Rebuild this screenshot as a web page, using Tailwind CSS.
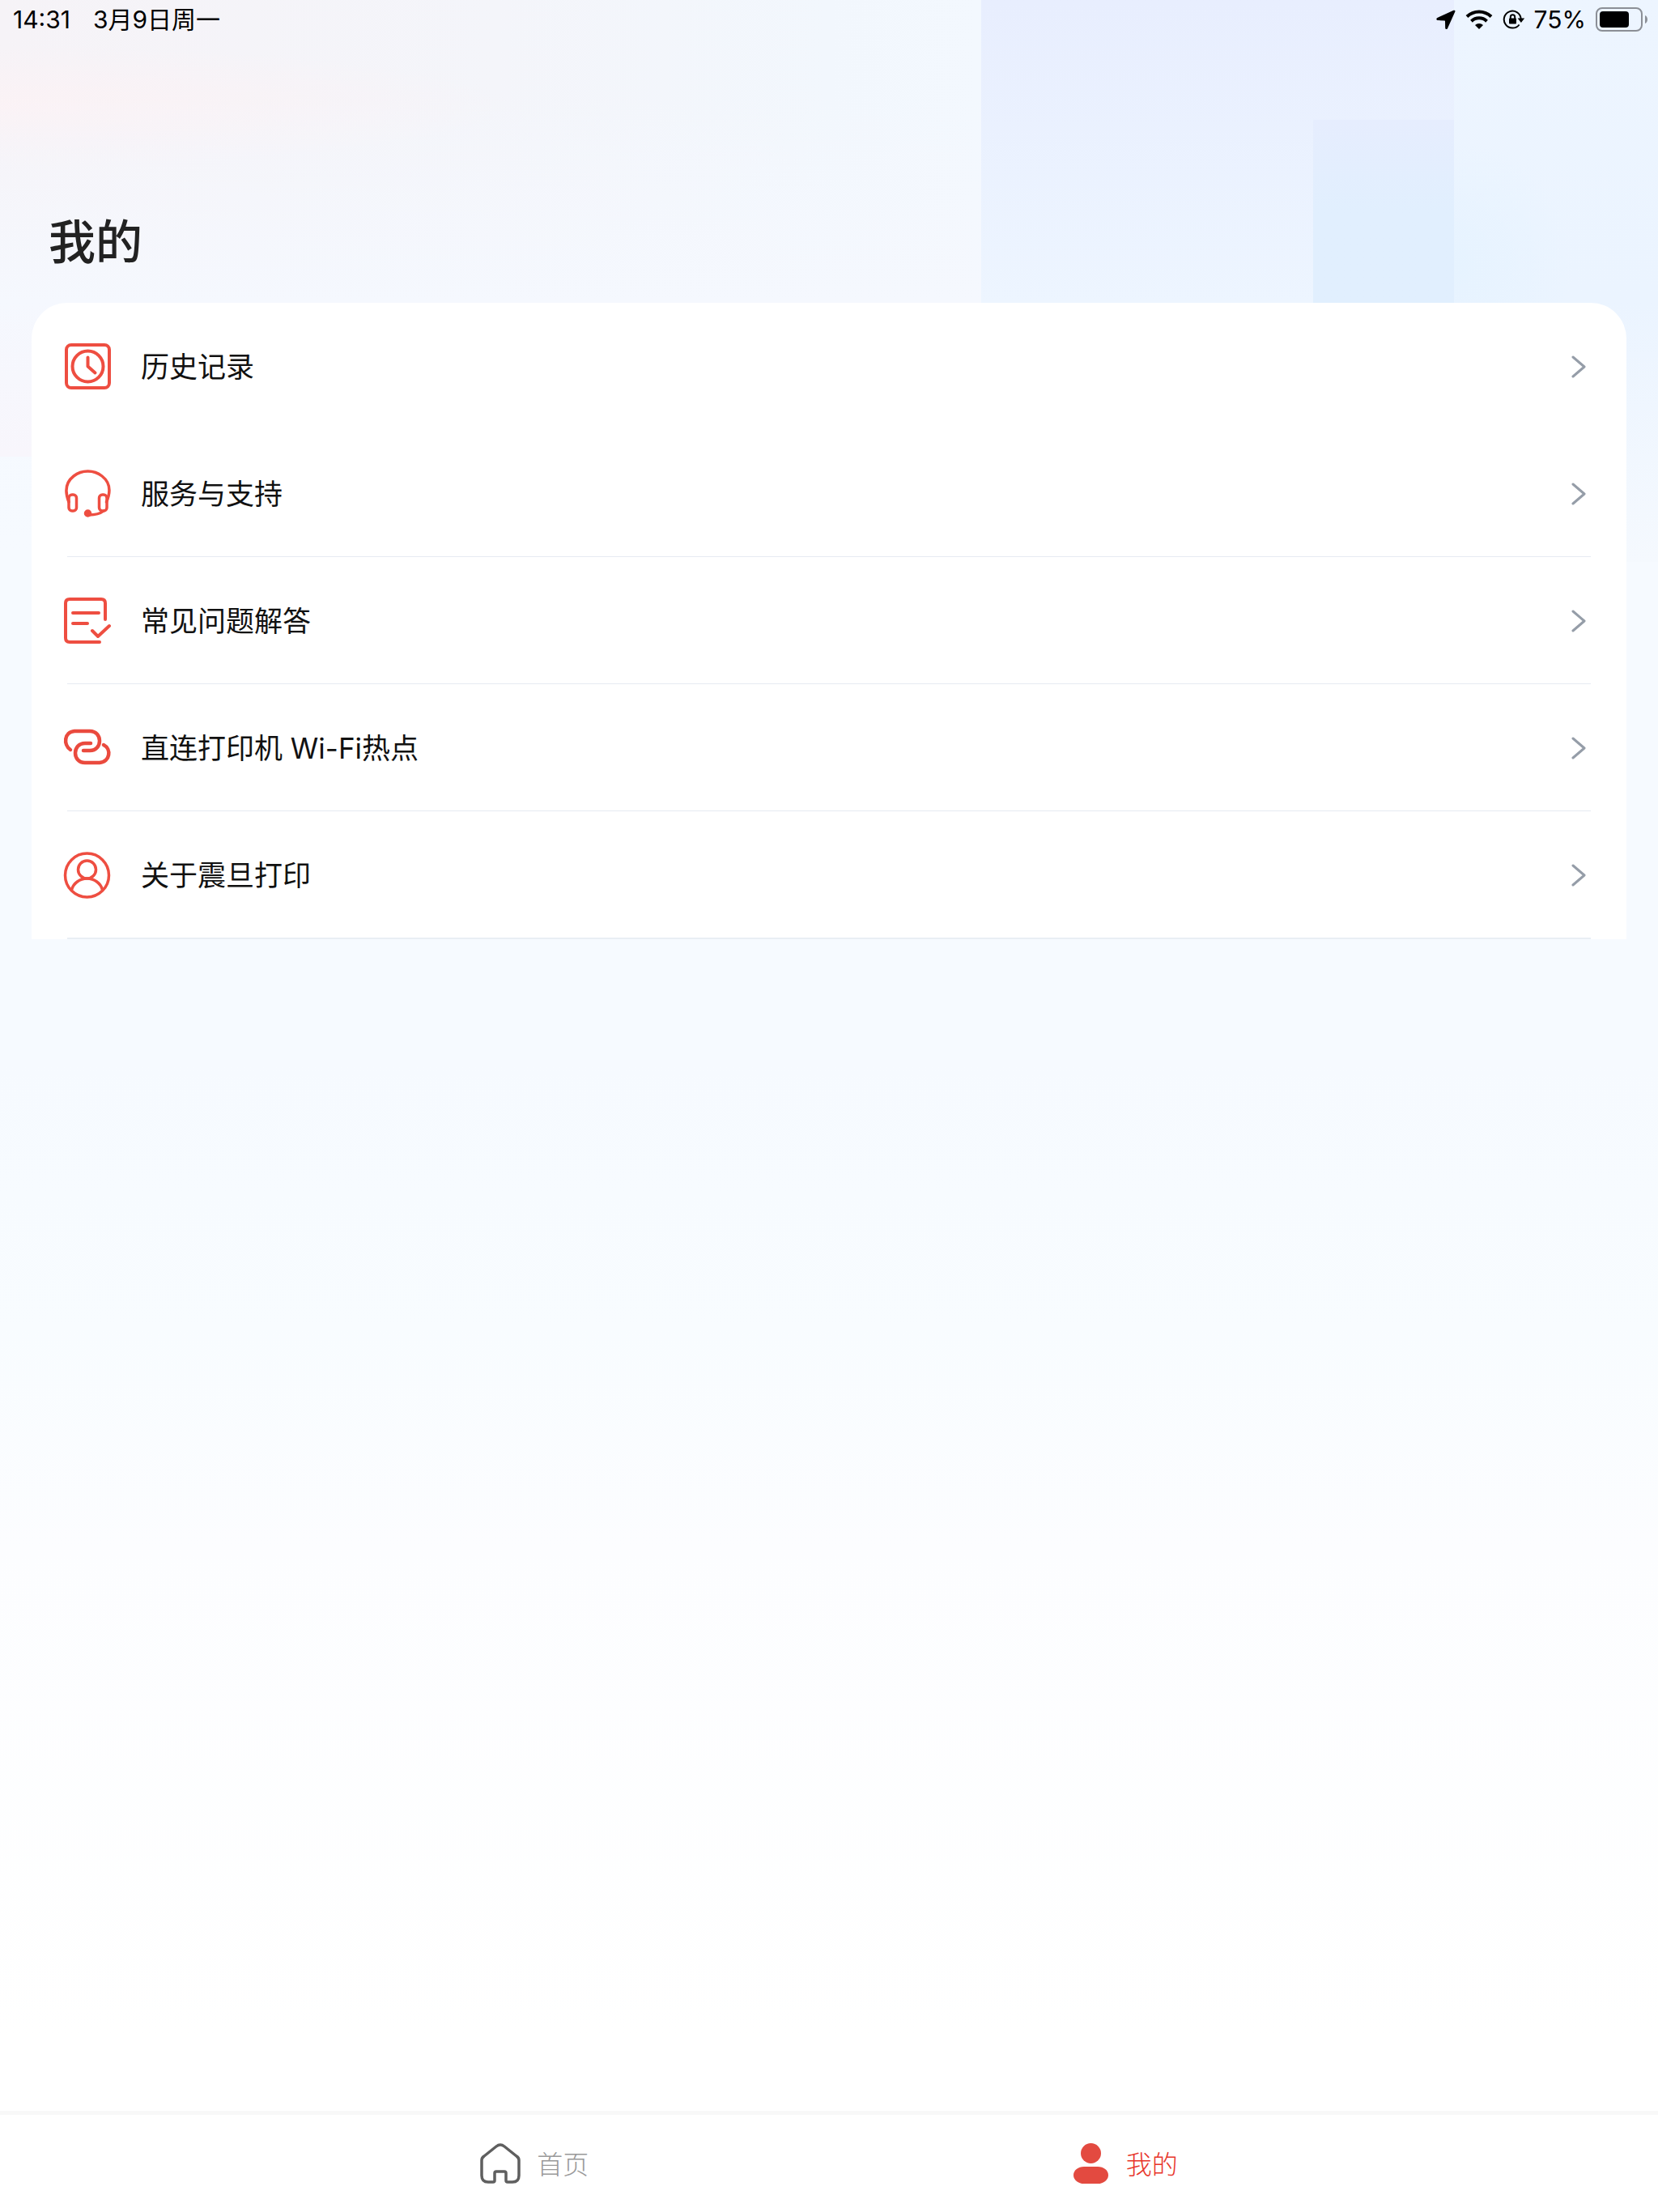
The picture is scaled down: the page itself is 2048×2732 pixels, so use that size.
<!DOCTYPE html>
<html lang="zh-CN">
<head>
    <meta charset="UTF-8">
    <meta name="viewport" content="width=device-width, initial-scale=1.0">
    <title>我的</title>
    <script src="https://cdn.jsdelivr.net/npm/@tailwindcss/browser@4"></script>
</head>
<body class="font-['Inter','Noto_Sans_CJK_SC',sans-serif] text-[#111111]">
    <div class="relative isolate flex flex-col min-h-screen bg-[linear-gradient(to_bottom,#f4f8ff_0%,#f6faff_25%,#f6faff_48%,#f8fcff_60%,#fcfdff_70%,#ffffff_92%)]">

        <!-- backdrop -->
        <div class="absolute inset-x-0 top-0 h-[374px] -z-10 overflow-hidden" aria-hidden="true">
            <div class="absolute inset-0 bg-[linear-gradient(to_right,#f6f3f7_0%,#f4f5fa_30%,#f2f7fd_50%,#f3f8fe_59%)]"></div>
            <div class="absolute inset-0 bg-[radial-gradient(ellipse_at_0%_35%,#fbf2f5_0%,transparent_22%)]"></div>
            <div class="absolute inset-0 bg-linear-to-b from-transparent from-30% to-[#f5f8fe]"></div>
            <div class="absolute inset-y-0 left-[59.2%] right-0 bg-linear-to-b from-[#e8eefe] to-[#edf5ff]"></div>
            <div class="absolute top-[148px] bottom-0 left-[79.2%] right-[12.3%] bg-linear-to-b from-[#e6edfe] to-[#e1effe] to-50%"></div>
            <div class="absolute inset-y-0 left-[87.7%] right-0 bg-linear-to-b from-[#edf5ff] to-[#ebf4ff]"></div>
            <div class="absolute top-[148px] bottom-0 left-[87.7%] right-[4%] bg-[radial-gradient(ellipse_at_0%_80%,#e6f3ff_0%,transparent_60%)]"></div>
        </div>
        <div class="absolute top-[374px] left-0 w-[84px] h-[190px] -z-10 bg-linear-to-b from-[#f5f8fe] to-[#f8f6fc]" aria-hidden="true"></div>
        <div class="absolute top-[374px] right-0 w-[84px] h-[320px] -z-10 bg-linear-to-b from-[#ebf4ff] to-[#f5f9fe]" aria-hidden="true"></div>

        <!-- status bar -->
        <header class="flex items-center justify-between h-12 pl-4 pr-3 text-[30px] leading-none text-black">
            <div class="flex gap-7">
                <span>14:31</span>
                <span>3月9日周一</span>
            </div>
            <div class="flex items-center gap-[11px]">
                <svg class="w-6 h-6" viewBox="0 0 24 24"><path d="M21.500.8 1.400 9.900c-1.700.8-1.400 3.100.6 3.200l8.400.3c.4 0 .6.200.6.600l.2 8.400c0 2 2.100 2.300 2.900.6L23.400 2.300c.5-1.100-.7-2-1.900-1.500Z"/></svg>
                <svg class="w-9 h-6" viewBox="0 0 36 24" fill="none" stroke="#000" stroke-width="4">
                    <path d="M3 8.500a21.500 21.500 0 0 1 30 0"/>
                    <path d="M8.500 14.200a13.600 13.600 0 0 1 19 0"/>
                    <path d="M18 24l-5-5a7.200 7.200 0 0 1 10 0Z" fill="#000" stroke="none"/>
                </svg>
                <svg class="w-7 h-6" viewBox="0 0 28 24" fill="none" stroke="#000" stroke-width="2">
                    <path d="M20.600 18.500A10.500 10.500 0 1 1 22.700 11"/>
                    <path d="M18.600 10.500h8.600l-4.300 5.500Z" fill="#000" stroke="none"/>
                    <rect x="8" y="10.500" width="9" height="7" rx="1" fill="#000" stroke="none"/>
                    <path d="M9.800 11V9a2.700 2.700 0 0 1 5.400 0v2"/>
                </svg>
                <span>75%</span>
                <svg class="w-[66px] h-[30px]" viewBox="0 0 66 30">
                    <rect x="2" y="1" width="56" height="28" rx="7" fill="none" stroke="#8b8f96" stroke-width="2"/>
                    <rect x="6" y="5" width="36" height="20" rx="4"/>
                    <path d="M62 10c4 1.500 4 8.500 0 10Z" fill="#8b8f96"/>
                </svg>
            </div>
        </header>

        <main class="flex-1 px-[39px]">
            <h1 class="pt-[211px] pb-[35px] px-[21px] text-[58px] leading-[80px] font-medium text-[#222222]">我的</h1>

            <nav class="bg-white rounded-t-[44px] pl-[39px] pr-[46px]">
                <a href="#history" class="flex items-center h-[157px] gap-9">
                    <svg class="w-[60px] h-[60px]" viewBox="0 0 60 60" fill="none" stroke="#ee4e41" stroke-width="4" stroke-linecap="round" stroke-linejoin="round">
                        <rect x="4" y="3" width="53" height="53" rx="6"/>
                        <circle cx="30.500" cy="29.500" r="19"/>
                        <path d="M30.500 18.500v11l9 8"/>
                    </svg>
                    <span class="flex-1 pt-0.5 text-[35px]">历史记录</span>
                    <svg class="w-6 h-7" viewBox="0 0 24 28" fill="none" stroke="#959da8" stroke-width="3" stroke-linecap="round" stroke-linejoin="round"><path d="M4 2l14 12L4 26"/></svg>
                </a>
                <a href="#support" class="flex items-center h-[157px] gap-9">
                    <svg class="w-[60px] h-[60px]" viewBox="0 0 60 60" fill="none" stroke="#ee4e41" stroke-width="3.500" stroke-linecap="round" stroke-linejoin="round">
                        <path d="M7 40C1 25 4 15 13 8c10-8 25-8 35 0 9 7 12 17 5.500 32"/>
                        <rect x="7" y="31" width="9.500" height="20" rx="4"/>
                        <rect x="44.500" y="31" width="9.500" height="20" rx="4"/>
                        <path d="M50 51c-5 4-11 5-18 5"/>
                        <circle cx="30.500" cy="54" r="3" fill="#ee4e41"/>
                    </svg>
                    <span class="flex-1 pt-0.5 text-[35px]">服务与支持</span>
                    <svg class="w-6 h-7" viewBox="0 0 24 28" fill="none" stroke="#959da8" stroke-width="3" stroke-linecap="round" stroke-linejoin="round"><path d="M4 2l14 12L4 26"/></svg>
                </a>
                <hr class="ml-[5px] -mr-0.5 -mt-px border-[#e6eaf2]">
                <a href="#faq" class="flex items-center h-[157px] gap-9">
                    <svg class="w-[60px] h-[60px]" viewBox="0 0 60 60" fill="none" stroke="#ee4e41" stroke-width="4" stroke-linecap="round" stroke-linejoin="round">
                        <path d="M45 56H8q-5 0-5-5V8q0-5 5-5h39q5 0 5 5v20"/>
                        <path d="M12 20h32M12 33h18M36 42l7 7 14-13"/>
                    </svg>
                    <span class="flex-1 pt-0.5 text-[35px]">常见问题解答</span>
                    <svg class="w-6 h-7" viewBox="0 0 24 28" fill="none" stroke="#959da8" stroke-width="3" stroke-linecap="round" stroke-linejoin="round"><path d="M4 2l14 12L4 26"/></svg>
                </a>
                <hr class="ml-[5px] -mr-0.5 -mt-px border-[#e6eaf2]">
                <a href="#hotspot" class="flex items-center h-[157px] gap-9">
                    <svg class="w-[60px] h-[60px]" viewBox="0 0 60 60" fill="none" stroke="#ea4a3e" stroke-width="4.500" stroke-linecap="round" stroke-linejoin="round">
                        <path d="M9 32C0 26 1 10 14 9h19c16 0 16 24 0 24h-8"/>
                        <path d="M34 24h-7c-16 0-16 24 0 24h18c13-1 15-17 5-22"/>
                    </svg>
                    <span class="flex-1 pt-0.5 text-[35px]">直连打印机 Wi-Fi热点</span>
                    <svg class="w-6 h-7" viewBox="0 0 24 28" fill="none" stroke="#959da8" stroke-width="3" stroke-linecap="round" stroke-linejoin="round"><path d="M4 2l14 12L4 26"/></svg>
                </a>
                <hr class="ml-[5px] -mr-0.5 -mt-px border-[#e6eaf2]">
                <a href="#about" class="flex items-center h-[157px] gap-9">
                    <svg class="w-[60px] h-[60px]" viewBox="0 0 60 60" fill="none" stroke="#ee4e41" stroke-width="3.500" stroke-linecap="round" stroke-linejoin="round">
                        <circle cx="29.500" cy="30" r="27"/>
                        <circle cx="29.500" cy="23" r="11"/>
                        <path d="M10.500 48c2-8 10-14 19-14s17 6 19 14"/>
                    </svg>
                    <span class="flex-1 pt-0.5 text-[35px]">关于震旦打印</span>
                    <svg class="w-6 h-7" viewBox="0 0 24 28" fill="none" stroke="#959da8" stroke-width="3" stroke-linecap="round" stroke-linejoin="round"><path d="M4 2l14 12L4 26"/></svg>
                </a>
                <hr class="ml-[5px] -mr-0.5 -mt-px border-t-2 border-[#e9eef4]">
            </nav>
        </main>

        <!-- tab bar -->
        <nav class="flex items-center justify-evenly gap-1 h-[125px] border-t-[5px] border-[#f8f8f8] bg-white text-[32px] font-light">
            <a href="#home" class="flex items-center gap-5 text-[#999999]">
                <svg class="w-[50px] h-[50px]" viewBox="0 0 50 50" fill="none" stroke="#5f5f5f" stroke-width="3.500" stroke-linejoin="round">
                    <path d="M2 21q0-3 3-5L20 4q5-4 10 0l15 12q3 2 3 5v19q0 8-8 8h-6q-2 0-2-2V37q0-2-2-2H20q-2 0-2 2v9q0 2-2 2h-6q-8 0-8-8Z"/>
                </svg>
                <span class="pt-1">首页</span>
            </a>
            <a href="#mine" class="flex items-center gap-5 text-[#e8352a]">
                <svg class="w-[46px] h-[50px]" viewBox="0 0 46 50" fill="#e34a40">
                    <circle cx="22.500" cy="12.500" r="12.500"/>
                    <rect x="1" y="29" width="43" height="21" rx="13" ry="10.500"/>
                </svg>
                <span class="pt-1">我的</span>
            </a>
        </nav>
    </div>
</body>
</html>
